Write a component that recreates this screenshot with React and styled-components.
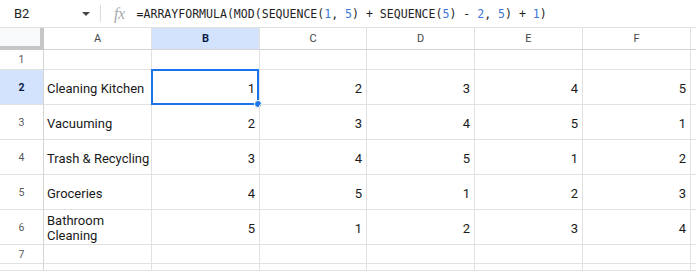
import React from 'react';
import styled, { createGlobalStyle, css } from 'styled-components';

const GlobalStyle = createGlobalStyle`
  html, body {
    margin: 0;
    padding: 0;
    background: #ffffff;
    overflow: hidden;
  }
  * {
    box-sizing: border-box;
  }
`;

const FORMULA = '=ARRAYFORMULA(MOD(SEQUENCE(1, 5) + SEQUENCE(5) - 2, 5) + 1)';
const COLUMNS = ['A', 'B', 'C', 'D', 'E', 'F', ''];

// each task row and its rotation values
const ROWS = [
  { n: 1, label: '1' },
  { n: 2, label: '2', task: 'Cleaning Kitchen', values: [1, 2, 3, 4, 5] },
  { n: 3, label: '3', task: 'Vacuuming', values: [2, 3, 4, 5, 1] },
  { n: 4, label: '4', task: 'Trash & Recycling', values: [3, 4, 5, 1, 2] },
  { n: 5, label: '5', task: 'Groceries', values: [4, 5, 1, 2, 3] },
  { n: 6, label: '6', task: 'Bathroom Cleaning', values: [5, 1, 2, 3, 4], wrap: true },
  { n: 7, label: '7' },
  { n: 8, label: '' },
];

const App = () => {
  const tokens = FORMULA.split(/(\d+)/);

  return (
    <Page>
      <GlobalStyle />
      <FormulaBar>
        <NameBox>
          <span>B2</span>
          <Caret />
        </NameBox>
        <Divider />
        <FxLabel>fx</FxLabel>
        <Formula>
          {tokens.map((t, i) =>
            /^\d+$/.test(t) ? <Num key={i}>{t}</Num> : <span key={i}>{t}</span>
          )}
        </Formula>
      </FormulaBar>

      <Grid>
        <Corner />
        {COLUMNS.map((c, i) => (
          <ColHeader key={`h${i}`} selected={c === 'B'}>{c}</ColHeader>
        ))}

        {ROWS.map(row => (
          <React.Fragment key={row.n}>
            <RowHeader selected={row.n === 2}>{row.label}</RowHeader>
            <Cell wrap={row.wrap}>{row.task}</Cell>
            {[0, 1, 2, 3, 4].map(i => (
              <Cell key={i} numeric>
                {row.values ? row.values[i] : ''}
                {row.n === 2 && i === 0 && (
                  <Selection>
                    <FillHandle />
                  </Selection>
                )}
              </Cell>
            ))}
            <Cell />
          </React.Fragment>
        ))}
      </Grid>
    </Page>
  );
};

// Styled Components
const Page = styled.div`
  display: flex;
  flex-direction: column;
  height: 100vh;
  width: 100vw;
  font-family: Roboto, 'Liberation Sans', sans-serif;
  color: #1f1f1f;
`;

const FormulaBar = styled.div`
  display: flex;
  align-items: center;
  height: 28px;
  flex-shrink: 0;
  border-bottom: 1px solid #e1e1e1;
`;

const NameBox = styled.div`
  display: flex;
  align-items: center;
  justify-content: space-between;
  width: 100px;
  padding: 0 10px 0 14px;
  font-size: 13px;
  color: #1f1f1f;
`;

const Caret = styled.span`
  width: 0;
  height: 0;
  border-left: 4px solid transparent;
  border-right: 4px solid transparent;
  border-top: 4px solid #444746;
`;

const Divider = styled.div`
  width: 1px;
  height: 17px;
  background: #dadce0;
`;

const FxLabel = styled.span`
  margin: 0 12px 0 13px;
  font-family: 'Liberation Serif', serif;
  font-style: italic;
  font-size: 16px;
  color: #a8abae;
  letter-spacing: -0.5px;
`;

const Formula = styled.div`
  font-family: 'DejaVu Sans Mono', monospace;
  font-size: 11.55px;
  color: #1f1f1f;
  white-space: pre;
`;

const Num = styled.span`
  color: #3c78d8;
`;

const Grid = styled.div`
  flex: 1;
  display: grid;
  grid-template-columns: 44px 108px 108px 107px 108px 108px 108px 1fr;
  grid-template-rows: 22px 20px repeat(5, 35px) 19px 1fr;
  overflow: hidden;
`;

const Corner = styled.div`
  background: #f8f9fa;
  border-right: 4px solid #c4c7c5;
  border-bottom: 4px solid #c4c7c5;
`;

const headerBase = css`
  display: flex;
  align-items: center;
  justify-content: center;
  font-size: 11px;
  color: #444746;
  border-right: 1px solid #e1e1e1;
  border-bottom: 1px solid #d5d5d5;
`;

const ColHeader = styled.div`
  ${headerBase}
  background: ${props => (props.selected ? '#d3e3fd' : '#ffffff')};
  font-weight: ${props => (props.selected ? 700 : 400)};
  color: ${props => (props.selected ? '#041e49' : '#444746')};
`;

const RowHeader = styled.div`
  ${headerBase}
  font-size: 10.5px;
  border-right: 1px solid #d5d5d5;
  border-bottom: 1px solid #e1e1e1;
  background: ${props => (props.selected ? '#d3e3fd' : '#ffffff')};
  font-weight: ${props => (props.selected ? 700 : 400)};
  color: ${props => (props.selected ? '#041e49' : '#575a5c')};
`;

const Cell = styled.div`
  position: relative;
  display: flex;
  align-items: center;
  justify-content: ${props => (props.numeric ? 'flex-end' : 'flex-start')};
  padding: 2px ${props => (props.numeric ? '4px' : '3px')} 0 3px;
  font-size: 13px;
  line-height: 15px;
  color: #1a1a1a;
  white-space: ${props => (props.wrap ? 'normal' : 'nowrap')};
  border-right: 1px solid #e1e1e1;
  border-bottom: 1px solid #e1e1e1;
`;

const Selection = styled.div`
  position: absolute;
  top: -1px;
  left: -1px;
  right: 0;
  bottom: -1px;
  border: 2px solid #1a73e8;
  pointer-events: none;
`;

const FillHandle = styled.div`
  position: absolute;
  right: -5px;
  bottom: -5px;
  width: 8px;
  height: 8px;
  border-radius: 50%;
  background: #1a73e8;
  border: 1px solid #ffffff;
`;

export default App;
